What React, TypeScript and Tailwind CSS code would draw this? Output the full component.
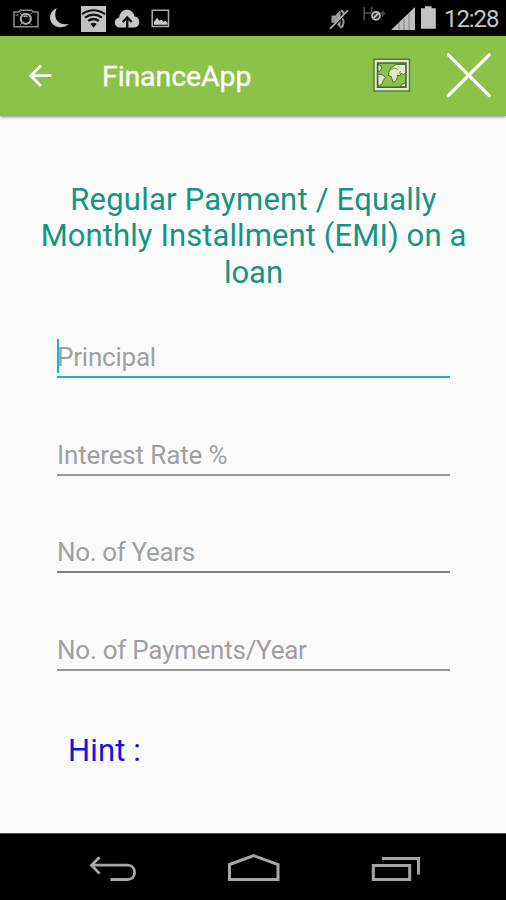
import type { ReactNode } from 'react';

type IconProps = { box: string; className: string; children: ReactNode };

function Icon({ box, className, children }: IconProps) {
  return (
    <svg viewBox={box} className={`shrink-0 ${className}`} fill="none" aria-hidden="true">
      {children}
    </svg>
  );
}

function StatusBar() {
  return (
    <div className="flex h-9 shrink-0 items-start bg-black text-[#c6c6c6]">
      <Icon box="12 0 28 36" className="ml-3 h-9 w-7">
        <path d="M14 12h5l1.500-1.800h11L33 12h5v14.700H14z" stroke="#8c8c8c" strokeWidth="1.500" />
        <circle cx="25.800" cy="18.800" r="5" stroke="#a8a8a8" strokeWidth="2.200" />
        <path d="M23.500 17q2-2 4 0M15.500 15h3" stroke="#a8a8a8" strokeWidth="1.200" />
        <path d="M20 13l2 2M31.500 13l-2 2M20 25l2-2M31.500 25l-2-2" stroke="#888" strokeWidth="1" />
      </Icon>
      <Icon box="48 0 24 36" className="ml-2 h-9 w-6">
        <path d="M56.800 8.200C51.800 10.200 49.500 14.500 50.200 19c1.200 7.700 11.600 11.600 19 4.800-6.800 1.700-11.700-1-13.200-5.200-1.300-3.700-.8-7.400.8-10.400z" fill="#c6c6c6" />
      </Icon>
      <Icon box="80 0 28 36" className="ml-2 h-9 w-7">
        <path d="M81 6h25v26H81z" fill="#c2c2c2" />
        <path d="M82 14.200Q93.500 6.300 105 14.200M85 17.700Q93.500 11.500 102 17.700M88.200 21Q93.500 17 98.800 21" stroke="#111" strokeWidth="2.200" />
        <path d="M90.300 23.800Q93.500 21.800 96.700 23.800L93.500 27.700z" fill="#111" />
      </Icon>
      <Icon box="114 0 27 36" className="ml-1.5 h-9 w-[27px]">
        <path d="M120 27.500c-6.500 0-7-9-.8-10C120 7.200 133.300 7.200 134.500 16.500c6.500.5 6.300 11-.3 11z" fill="#c6c6c6" />
        <path d="M127.200 28V19M122.800 22l4.400-4.500 4.400 4.500" stroke="#111" strokeWidth="2.400" />
      </Icon>
      <Icon box="150 0 21 36" className="ml-[9px] h-9 w-[21px]">
        <path d="M152.200 10.200h16.300v16.300h-16.300z" stroke="#a9a9a9" strokeWidth="1.500" />
        <path d="M154 24.800v-3l3-4 2.500 3 2-1 2 2 2-1 2 2v2z" fill="#c6c6c6" />
      </Icon>
      <div className="flex-1" />
      <Icon box="328 0 22 36" className="h-9 w-[22px]">
        <path d="M331.500 15.500h4l5-5.700v18.500l-5-5.500h-4z" fill="#9b9b9b" />
        <path d="M341 10.500c3.500 1 3.500 5 1 7.500 2.500 2.500 2 8-1.500 10" stroke="#999" strokeWidth="2" />
        <path d="M331 29.500L348.600 11" stroke="#000" strokeWidth="1.500" />
        <path d="M330 28.800L348 10.200" stroke="#adadad" strokeWidth="1.700" />
      </Icon>
      <Icon box="361 0 26 36" className="ml-[11px] h-9 w-[26px]">
        <path d="M364.200 7v13.500M371.500 7v5M364.200 13h7M380 13.500h5.500M382.700 10.700v5.500" stroke="#505050" strokeWidth="1.700" />
        <circle cx="376" cy="15.800" r="4" fill="#333" stroke="#bdbdbd" strokeWidth="1.700" />
        <path d="M373.700 17.800l4.600-4.500" stroke="#d2d2d2" strokeWidth="1.700" />
      </Icon>
      <Icon box="391 0 25 36" className="ml-1 h-9 w-[25px]">
        <path d="M391 30L415 7v23z" fill="#bebebe" />
        <path d="M399 30v-7M404 30V18M409 30V13" stroke="#919191" strokeWidth="1.300" />
      </Icon>
      <Icon box="420 0 17 36" className="ml-1 h-9 w-[17px]">
        <path d="M421 8.300h4V6.200h6.500v2.100h4.300v20.500H421z" fill="#c2c2c2" />
      </Icon>
      <span className="ml-[7px] w-[62px] whitespace-nowrap text-[24px] leading-[38px] tracking-[-1.100px]">12:28</span>
    </div>
  );
}

function AppBar() {
  return (
    <header className="z-10 flex h-20 shrink-0 items-start bg-[#8bc34a] shadow-[0_1px_3px_rgba(0,0,0,0.45)]">
      <Icon box="27 36 27 80" className="ml-[27px] h-20 w-[27px]">
        <path d="M51.300 75.700H31M41 65.500L30.700 75.700 41 86" stroke="#fff" strokeWidth="2.700" />
      </Icon>
      <h1 className="ml-12 flex-1 whitespace-nowrap text-[28.500px] font-normal leading-[81px] tracking-[-0.100px] text-white [-webkit-text-stroke:0.300px_white]">FinanceApp</h1>
      <Icon box="372 36 40 80" className="h-20 w-10">
        <path d="M374 59.200h35.500v31.800H374z" fill="#e2efd2" stroke="#597c35" strokeWidth="1.500" />
        <path d="M377.500 63h28.500v24.300h-28.500z" fill="#8bc34a" stroke="#42652a" strokeWidth="1.500" />
        <g fill="#dcebc9" stroke="#42652a" strokeWidth=".9">
          <path d="M378 64.500l3.500 1.500.5 2-2.500 3.500-1.500-.5z" />
          <path d="M378 74l4 .5 3.500 3-2.200 2.800-1 3.500-3.300 2.200-1-1z" />
          <path d="M389 72l2-4 5-3.500h9.500l.2 8-2.500 2.500-2-2-1.500 3-2-1-1 5-3.500 2.500-2-6-3-1z" />
          <path d="M400.500 86.500l1.500-2 3.500-1.800v4z" />
        </g>
        <path d="M391 69.500l4-1.500 3 2M399 74l1.500-3" stroke="#6f9b43" strokeWidth="1" />
      </Icon>
      <Icon box="445 36 48 80" className="ml-[33px] mr-[13px] h-20 w-12">
        <path d="M448.300 54.800L489.200 95.700M489.200 54.800L448.300 95.700" stroke="#fff" strokeWidth="3.300" strokeLinecap="round" />
      </Icon>
    </header>
  );
}

const fields = [
  { label: 'Principal', active: true, text: 'tracking-[-0.220px]', line: 'bg-[#18b3c9]' },
  { label: 'Interest Rate %', active: false, text: 'tracking-[-0.130px]', line: 'bg-[#969696]' },
  { label: 'No. of Years', active: false, text: 'tracking-[-0.350px]', line: 'bg-[#808080]' },
  { label: 'No. of Payments/Year', active: false, text: 'tracking-[-0.250px]', line: 'bg-[#969696]' },
];

function NavBar() {
  return (
    <nav className="flex h-[67px] shrink-0 items-start border-t border-[#555] bg-black">
      <Icon box="88 834 50 66" className="ml-[88px] h-[66px] w-[50px]">
        <path d="M92 865.200h35.500c9.500 0 9.500 14.300 0 14.300h-17M99.500 857.300L91.500 865.200 99.500 873.600" stroke="#a7a7a7" strokeWidth="2.800" />
      </Icon>
      <Icon box="226 834 56 66" className="ml-[88px] h-[66px] w-14">
        <path d="M229.500 864.500L253.800 855.700 278 864.500V879.500H229.500z" stroke="#a7a7a7" strokeWidth="3" />
      </Icon>
      <Icon box="370 834 52 66" className="ml-[88px] h-[66px] w-[52px]">
        <path d="M373.300 865.500h36.400v14h-36.400zM382 858.500h36.500V874.500" stroke="#a4a4a4" strokeWidth="3" />
      </Icon>
    </nav>
  );
}

export default function App() {
  return (
    <div className="flex h-[900px] w-[506px] flex-col overflow-hidden bg-[#fafafa] font-[Roboto,sans-serif]">
      <StatusBar />
      <AppBar />
      <main className="flex flex-1 flex-col pt-[65.500px]">
        <h2 className="pl-px text-center text-[31px] leading-[36.500px] text-[#149481]">
          <span className="tracking-[0.220px]">Regular Payment / Equally</span>
          <br />
          <span className="tracking-[0.100px]">Monthly Installment (EMI) on a</span>
          <br />
          loan
        </h2>
        <form className="ml-[57px] mt-[36.400px] flex w-[393px] flex-col gap-[46.500px]">
          {fields.map((f) => (
            <label key={f.label} className="relative flex h-[51px] flex-col justify-between">
              <span className={`whitespace-nowrap text-[26px] leading-[60px] text-[#a0a0a0] ${f.text}`}>{f.label}</span>
              {f.active && <span className="absolute left-0 top-[12px] h-[34px] w-[2px] bg-[#18b3c9]" />}
              <span className={`absolute bottom-0 left-0 w-full ${f.active ? 'h-[2.500px]' : 'h-[2px]'} ${f.line}`} />
            </label>
          ))}
        </form>
        <p className="ml-[68px] mt-[61.500px] text-[31px] leading-[38px] tracking-[0.150px] text-[#1612dc]">Hint :</p>
      </main>
      <NavBar />
    </div>
  );
}
